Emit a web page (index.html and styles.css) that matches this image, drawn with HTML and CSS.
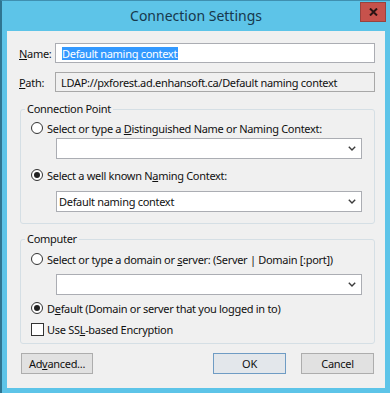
FILE: index.html
```html
<!DOCTYPE html>
<html>
<head>
<meta charset="utf-8">
<link rel="stylesheet" href="styles.css">
</head>
<body>
<div class="window">
  <div class="titlebar">
    <span class="title">Connection Settings</span>
    <div class="close">
      <svg width="9" height="8" viewBox="0 0 9 8"><path d="M1 0.5 L8 7.5 M8 0.5 L1 7.5" stroke="#2a1414" stroke-width="2"/></svg>
    </div>
  </div>
  <div class="client">
    <div class="row">
      <span class="lbl"><u>N</u>ame:</span>
      <div class="textbox"><span class="sel">Default naming context</span></div>
    </div>
    <div class="row path">
      <span class="lbl"><u>P</u>ath:</span>
      <div class="textbox ro">LDAP://pxforest.ad.enhansoft.ca/Default naming context</div>
    </div>

    <fieldset class="group g1">
      <legend>Connection Point</legend>
      <div class="opt first"><span class="radio"></span><span>Select or type a <u>D</u>istinguished Name or Naming Context:</span></div>
      <div class="combo c-first"><span class="val"></span><svg class="chev" width="8" height="5" viewBox="0 0 8 5"><polyline points="0.8,0.8 4,4 7.2,0.8" fill="none" stroke="#3c3c3c" stroke-width="1.4"/></svg></div>
      <div class="opt gap8"><span class="radio on"></span><span>Select a well known N<u>a</u>ming Context:</span></div>
      <div class="combo gap8"><span class="val">Default naming context</span><svg class="chev" width="8" height="5" viewBox="0 0 8 5"><polyline points="0.8,0.8 4,4 7.2,0.8" fill="none" stroke="#3c3c3c" stroke-width="1.4"/></svg></div>
    </fieldset>

    <fieldset class="group g2">
      <legend>Computer</legend>
      <div class="opt first2"><span class="radio"></span><span>Select or type a domain or <u>s</u>erver: (Server | Domain [:port])</span></div>
      <div class="combo gap7"><span class="val"></span><svg class="chev" width="8" height="5" viewBox="0 0 8 5"><polyline points="0.8,0.8 4,4 7.2,0.8" fill="none" stroke="#3c3c3c" stroke-width="1.4"/></svg></div>
      <div class="opt gap5"><span class="radio on"></span><span>D<u>e</u>fault (Domain or server that you logged in to)</span></div>
      <div class="opt gap5"><span class="check"></span><span>Use SS<u>L</u>-based Encryption</span></div>
    </fieldset>

    <div class="buttons">
      <div class="btn adv">Ad<u>v</u>anced...</div>
      <div class="spacer"></div>
      <div class="btn ok">OK</div>
      <div class="btn cancel">Cancel</div>
    </div>
  </div>
</div>
</body>
</html>
```

FILE: styles.css
```css
html, body {
  margin: 0;
  padding: 0;
}

body {
  width: 390px;
  height: 393px;
  overflow: hidden;
  background: #5dc4e8;
  font-family: "Noto Sans", "DejaVu Sans", sans-serif;
  font-size: 11px;
  letter-spacing: -0.3px;
  color: #111;
}

u {
  text-decoration: underline;
  text-underline-offset: 1px;
}

.window {
  height: 393px;
  box-sizing: border-box;
  border-top: 1px solid #3f8fb0;
  border-left: 2px solid #2f7591;
  padding: 0 5px 5px 5px;
  display: flex;
  flex-direction: column;
}

.titlebar {
  height: 30px;
  flex: none;
  position: relative;
  display: flex;
  justify-content: center;
  align-items: center;
}

.title {
  font-size: 14px;
  letter-spacing: 0;
  color: #17384c;
  line-height: 18px;
}

.close {
  position: absolute;
  right: -1px;
  top: 1px;
  width: 26px;
  height: 20px;
  box-sizing: border-box;
  background: #c7524c;
  border: 1px solid #98433f;
  display: flex;
  align-items: center;
  justify-content: center;
}

.client {
  flex: 1;
  background: #f0f0f0;
  padding: 12px 10px 0 12px;
  display: flex;
  flex-direction: column;
}

.row {
  display: flex;
  align-items: center;
  height: 20px;
}

.row.path {
  margin-top: 9px;
}

.lbl {
  width: 36px;
  flex: none;
}

.textbox {
  flex: 1;
  height: 20px;
  box-sizing: border-box;
  border: 1px solid #abadb3;
  background: #fff;
  display: flex;
  align-items: center;
  padding-left: 6px;
  white-space: nowrap;
}

.textbox.ro {
  background: #f0f0f0;
  border-color: #a8a8a8;
  padding-left: 5px;
}

.sel {
  background: #3399ff;
  color: #fff;
  line-height: 13px;
  padding-right: 1px;
}

.group {
  margin: 9px 0 0 1px;
  border: 1px solid #d5dfe5;
  border-radius: 3px;
  padding: 0 12px 11px 10px;
  min-width: 0;
}

.group legend {
  padding: 0 2px;
  margin-left: -6px;
  line-height: 16px;
}

.g2 {
  margin-top: 7px;
  padding-bottom: 6px;
}

.opt {
  display: flex;
  align-items: center;
  height: 16px;
  white-space: nowrap;
}

.opt.first {
  margin-top: 3px;
}

.opt.first2 {
  margin-top: 4px;
}

.gap8 {
  margin-top: 8px;
}

.gap7 {
  margin-top: 7px;
}

.gap5 {
  margin-top: 5px;
}

.radio {
  width: 12px;
  height: 12px;
  box-sizing: border-box;
  border: 1px solid #333;
  border-radius: 50%;
  background: #fff;
  margin-right: 4px;
  flex: none;
  display: flex;
  align-items: center;
  justify-content: center;
}

.radio.on::after {
  content: "";
  width: 6px;
  height: 6px;
  border-radius: 50%;
  background: #222;
}

.check {
  width: 13px;
  height: 13px;
  box-sizing: border-box;
  border: 1px solid #333;
  background: #fff;
  margin-right: 3px;
  flex: none;
}

.combo {
  margin-left: 25px;
  height: 21px;
  box-sizing: border-box;
  border: 1px solid #abadb3;
  background: #fff;
  display: flex;
  align-items: center;
  padding: 0 5px 0 2px;
}

.c-first {
  margin-top: 2px;
}

.combo .val {
  flex: 1;
}

.chev {
  flex: none;
}

.buttons {
  margin-top: 9px;
  display: flex;
  height: 21px;
}

.spacer {
  flex: 1;
}

.btn {
  height: 21px;
  box-sizing: border-box;
  width: 73px;
  border: 1px solid #adadad;
  background: #e1e1e1;
  display: flex;
  align-items: center;
  justify-content: center;
}

.btn.adv {
  width: 72px;
  margin-left: 2px;
}

.btn.ok {
  border-color: #6f9cc4;
  background: #e3e7eb;
}

.btn.cancel {
  margin-left: 15px;
  margin-right: 1px;
}
```
